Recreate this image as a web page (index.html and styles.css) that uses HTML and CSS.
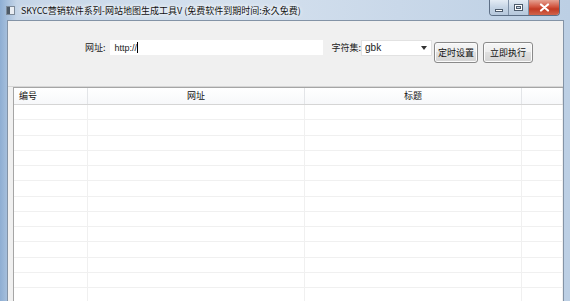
FILE: index.html
```html
<!doctype html>
<html lang="zh-CN">
<head>
	<meta charset="UTF-8">
	<title>SKYCC营销软件系列-网站地图生成工具V</title>
<link rel="stylesheet" href="styles.css">
</head>
<body>
<div class="window">
	<div class="titlebar">
		<span class="appicon"></span>
		<span class="caption">SKYCC营销软件系列-网站地图生成工具V (免费软件到期时间:永久免费)</span>
		<div class="controls">
			<span class="btn min"><i></i></span>
			<span class="btn max"><i></i></span>
			<span class="btn close">
				<svg width="11" height="9" viewBox="0 0 11 9"><path d="M2 1.5 L9 7.5 M9 1.5 L2 7.5" stroke="#fff" stroke-width="2.2" stroke-linecap="round"/></svg>
			</span>
		</div>
	</div>
	<div class="client">
		<div class="toolbar">
			<span class="label">网址:</span>
			<span class="input">http://<span class="caret"></span></span>
			<span class="label charset">字符集:</span>
			<span class="select">gbk<span class="arrow"></span></span>
			<span class="button first">定时设置</span>
			<span class="button">立即执行</span>
		</div>
		<div class="grid">
			<div class="row head">
				<span class="c1">编号</span>
				<span class="c2">网址</span>
				<span class="c3">标题</span>
				<span class="c4"></span>
			</div>
			<div class="row"><span class="c1"></span><span class="c2"></span><span class="c3"></span><span class="c4"></span></div>
			<div class="row"><span class="c1"></span><span class="c2"></span><span class="c3"></span><span class="c4"></span></div>
			<div class="row"><span class="c1"></span><span class="c2"></span><span class="c3"></span><span class="c4"></span></div>
			<div class="row"><span class="c1"></span><span class="c2"></span><span class="c3"></span><span class="c4"></span></div>
			<div class="row"><span class="c1"></span><span class="c2"></span><span class="c3"></span><span class="c4"></span></div>
			<div class="row"><span class="c1"></span><span class="c2"></span><span class="c3"></span><span class="c4"></span></div>
			<div class="row"><span class="c1"></span><span class="c2"></span><span class="c3"></span><span class="c4"></span></div>
			<div class="row"><span class="c1"></span><span class="c2"></span><span class="c3"></span><span class="c4"></span></div>
			<div class="row"><span class="c1"></span><span class="c2"></span><span class="c3"></span><span class="c4"></span></div>
			<div class="row"><span class="c1"></span><span class="c2"></span><span class="c3"></span><span class="c4"></span></div>
			<div class="row"><span class="c1"></span><span class="c2"></span><span class="c3"></span><span class="c4"></span></div>
			<div class="row"><span class="c1"></span><span class="c2"></span><span class="c3"></span><span class="c4"></span></div>
			<div class="row"><span class="c1"></span><span class="c2"></span><span class="c3"></span><span class="c4"></span></div>
		</div>
	</div>
</div>
</body>
</html>
```
FILE: styles.css
```css
*{
	margin:0;
	padding:0;
	box-sizing:border-box;
}
body{
	width:570px;
	height:301px;
	overflow:hidden;
	font-family:"Noto Sans CJK SC","Liberation Sans",sans-serif;
	font-size:9px;
	color:#222;
	background:#b9cde3;
}
.window{
	height:301px;
	display:flex;
	flex-direction:column;
	background:linear-gradient(90deg,#8eaed3 0%,#c6d6e8 3%,#d5e1ee 40%,#c9d8e9 70%,#bccfe4 100%);
}
.titlebar{
	height:20px;
	display:flex;
	align-items:center;
	padding-left:6px;
	flex:none;
}
.appicon{
	width:9px;
	height:9px;
	border:1px solid #7d8a98;
	background:linear-gradient(90deg,#4d5966 40%,#e9edf2 40%);
	margin-right:6px;
}
.caption{
	font-size:9px;
	color:#111;
	text-shadow:0 0 5px #fff,0 0 4px #fff;
}
.controls{
	margin-left:auto;
	margin-right:10px;
	align-self:flex-start;
	display:flex;
	height:16px;
	border:1px solid #5d6f86;
	border-top:none;
	border-radius:0 0 4px 4px;
	overflow:hidden;
}
.btn{
	display:flex;
	align-items:center;
	justify-content:center;
	height:100%;
	background:linear-gradient(#e4ecf5,#c5d4e5 50%,#b6c8dc);
	border-right:1px solid #7f91a7;
}
.min{
	width:19px;
}
.min i{
	width:8px;
	height:3px;
	margin-top:5px;
	background:#fff;
	border:1px solid #4d5b6c;
}
.max{
	width:20px;
}
.max i{
	width:9px;
	height:7px;
	border:1px solid #4d5b6c;
	box-shadow:inset 0 0 0 1px #fff,inset 0 0 0 2px #4d5b6c;
}
.close{
	width:30px;
	border-right:none;
	background:linear-gradient(#e5a293,#d2553f 45%,#c23a23 60%,#d0644c);
}
.client{
	flex:1;
	margin:0 6px 0 7px;
	background:#f0f0f0;
	border:1px solid #8393a6;
	border-bottom:none;
	display:flex;
	flex-direction:column;
}
.toolbar{
	height:66px;
	display:flex;
	align-items:flex-start;
	padding-top:19px;
	border-bottom:1px solid #d6d6d6;
}
.label{
	line-height:15px;
	margin-left:77px;
	margin-right:4px;
	color:#222;
}
.label.charset{
	margin-left:9px;
	margin-right:0;
}
.input{
	width:213px;
	height:15px;
	background:#fff;
	font-family:"Liberation Sans",sans-serif;
	font-size:9px;
	padding-left:5px;
	display:flex;
	align-items:center;
}
.caret{
	width:1px;
	height:11px;
	background:#000;
}
.select{
	width:71px;
	height:16px;
	background:#fff;
	border:1px solid #e2e2e2;
	font-family:"Liberation Sans",sans-serif;
	font-size:10px;
	line-height:14px;
	padding-left:3px;
	position:relative;
}
.arrow{
	position:absolute;
	right:4px;
	top:5px;
	border:3px solid transparent;
	border-top:4px solid #333;
}
.button{
	width:50px;
	height:21px;
	margin-left:5px;
	margin-top:2px;
	border:1px solid #8a8a8a;
	border-radius:3px;
	background:linear-gradient(#f6f6f6,#ededed 50%,#e0e0e0 50%,#d4d4d4);
	box-shadow:inset 0 0 0 1px #fbfbfb;
	line-height:19px;
	text-align:center;
	color:#111;
}
.button.first{
	width:44px;
	margin-left:2px;
}
.grid{
	flex:1;
	margin-left:5px;
	background:#fff;
	border-top:1px solid #a5a5a5;
	border-left:1px solid #a5a5a5;
}
.row{
	display:flex;
	height:15.27px;
	border-bottom:1px solid #f0f0f0;
}
.row span{
	border-right:1px solid #f0f0f0;
}
.row.head{
	height:17px;
	background:linear-gradient(#ffffff,#f7f8fa);
	border-bottom:1px solid #d5d5d5;
	line-height:16px;
	color:#111;
}
.row.head span{
	border-right:1px solid #e3e5e8;
}
.c1{
	width:74px;
	padding-left:5px;
}
.c2{
	width:217px;
	text-align:center;
}
.c3{
	width:217px;
	text-align:center;
}
.c4{
	flex:1;
}
```
